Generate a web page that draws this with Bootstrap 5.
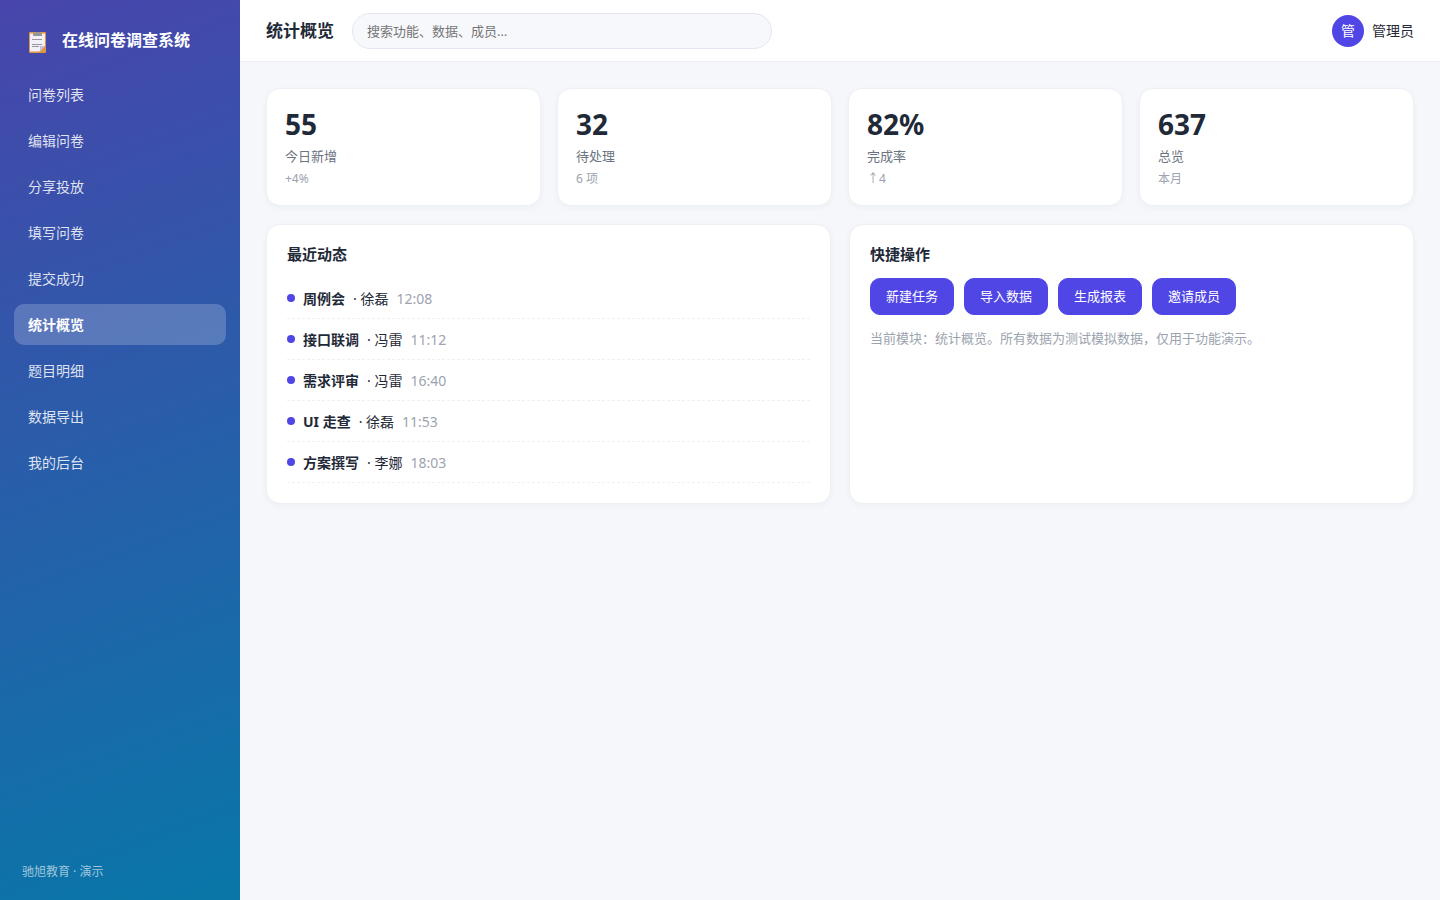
<!DOCTYPE html>
<html lang="zh-CN">
<head>
<meta charset="utf-8">
<meta name="viewport" content="width=device-width, initial-scale=1">
<title>统计概览 - 在线问卷调查系统</title>
<link href="https://cdn.jsdelivr.net/npm/bootstrap@5.3.0/dist/css/bootstrap.min.css" rel="stylesheet">
<style>
:root { --brand: #4f46e5; --ink: #1f2937; --line: #eef0f5; }
body { font: 14px/21px "Noto Sans", "Noto Sans CJK SC", sans-serif; color: var(--ink); background: #f5f7fb; }
.sidebar { width: 240px; padding: 20px 14px; background: linear-gradient(160deg, #4845ab 0%, #0877a8 100%); }
.brand-row { gap: 14px; padding: 7px 14px; margin-bottom: 14px; font-size: 16px; line-height: 24px; }
.side-nav { gap: 5px; }
.side-nav .nav-link { padding: 10px 14px; line-height: 21px; border-radius: 10px; color: rgba(255,255,255,.85); }
.side-nav .nav-link:hover { background: rgba(255,255,255,.1); }
.side-nav .nav-link.active { background: rgba(255,255,255,.2); color: #fff; font-weight: 700; }
.side-foot { padding: 0 8px; font-size: 12px; line-height: 16px; color: rgba(255,255,255,.6); }
.topbar { height: 62px; padding: 0 26px; gap: 18px; border-bottom: 1px solid #eceef4; }
.page-title { font-size: 17px; line-height: 26px; }
.search-box { max-width: 420px; height: 36px; padding: 0 14px; font-size: 13px; border-color: #e4e7f0; background: #f7f8fc; }
.search-box::placeholder { color: #757575; }
.avatar { width: 32px; height: 32px; background: var(--brand); }
.content-area { padding: 26px; }
.stat-grid { display: grid; grid-template-columns: repeat(4, 1fr); gap: 16px; margin-bottom: 18px; }
.panel-grid { display: grid; grid-template-columns: repeat(2, 1fr); gap: 18px; }
.tile { background: #fff; border: 1px solid var(--line); border-radius: 14px; box-shadow: 0 2px 6px rgba(31,41,55,.04); }
.stat { padding: 18px; }
.stat-num { font-size: 28px; line-height: 34px; }
.stat-label { font-size: 13px; line-height: 20px; margin-top: 5px; color: #6b7280; }
.stat-sub { font-size: 12px; line-height: 17px; margin-top: 4px; color: #9ca3af; }
.panel { padding: 18px 20px 20px; }
.panel-title { font-size: 15px; line-height: 22px; margin-bottom: 13px; }
.feed-item { gap: 8px; height: 41px; border-bottom: 1px dashed var(--line); }
.feed-dot { width: 8px; height: 8px; background: var(--brand); }
.muted { color: #9ca3af; }
.action-row { gap: 10px; }
.btn-brand { --bs-btn-color: #fff; --bs-btn-bg: var(--brand); --bs-btn-border-color: var(--brand); --bs-btn-hover-color: #fff; --bs-btn-hover-bg: #4338ca; --bs-btn-padding-x: 15px; --bs-btn-padding-y: 8px; --bs-btn-font-size: 13px; --bs-btn-line-height: 19px; --bs-btn-border-radius: 10px; }
.note { font-size: 13px; line-height: 20px; margin-top: 13px; }
</style>
</head>
<body>
<div class="d-flex min-vh-100">
  <aside class="sidebar d-flex flex-column flex-shrink-0">
    <div class="brand-row d-flex align-items-center fw-bold text-white">
      <svg class="mt-1" width="20" height="22" viewBox="0 0 20 22" aria-hidden="true">
        <rect x="1" y="1" width="17" height="21" rx="1" fill="#e09545"/>
        <path d="M2 2.500h15v12.500l-5 5.500H2z" fill="#f3f0fa"/>
        <path d="M17 15v6h-6z" fill="#e09545"/>
        <path d="M17 15l-5 5.500v-5.500z" fill="#c5bfda"/>
        <path d="M5 2h2.500V1h4v1H14v3H5z" fill="#969696"/>
        <path d="M4 8.500h10M4 13.500h10M4 15.500h7" stroke="#96969c"/>
      </svg>
      <span>在线问卷调查系统</span>
    </div>
    <nav class="side-nav nav flex-column" aria-label="主导航">
      <a class="nav-link" href="#">问卷列表</a>
      <a class="nav-link" href="#">编辑问卷</a>
      <a class="nav-link" href="#">分享投放</a>
      <a class="nav-link" href="#">填写问卷</a>
      <a class="nav-link" href="#">提交成功</a>
      <a class="nav-link active" href="#" aria-current="page">统计概览</a>
      <a class="nav-link" href="#">题目明细</a>
      <a class="nav-link" href="#">数据导出</a>
      <a class="nav-link" href="#">我的后台</a>
    </nav>
    <div class="side-foot mt-auto">驰旭教育 · 演示</div>
  </aside>
  <div class="flex-grow-1">
    <header class="topbar d-flex align-items-center bg-white">
      <h1 class="page-title fw-bold mb-0 text-nowrap">统计概览</h1>
      <input class="search-box form-control rounded-pill" type="search" aria-label="搜索" placeholder="搜索功能、数据、成员…">
      <div class="d-flex align-items-center gap-2 ms-auto text-nowrap">
        <span class="avatar rounded-circle d-flex align-items-center justify-content-center text-white">管</span>
        <span>管理员</span>
      </div>
    </header>
    <main class="content-area">
      <section class="stat-grid" aria-label="数据统计">
        <div class="tile stat"><div class="stat-num fw-bold">55</div><div class="stat-label">今日新增</div><div class="stat-sub">+4%</div></div>
        <div class="tile stat"><div class="stat-num fw-bold">32</div><div class="stat-label">待处理</div><div class="stat-sub">6 项</div></div>
        <div class="tile stat"><div class="stat-num fw-bold">82%</div><div class="stat-label">完成率</div><div class="stat-sub">↑4</div></div>
        <div class="tile stat"><div class="stat-num fw-bold">637</div><div class="stat-label">总览</div><div class="stat-sub">本月</div></div>
      </section>
      <div class="panel-grid">
        <section class="tile panel">
          <h2 class="panel-title fw-bold">最近动态</h2>
          <ul class="list-unstyled mb-0">
            <li class="feed-item d-flex align-items-center"><span class="feed-dot rounded-circle"></span><strong>周例会</strong><span>· 徐磊</span><time class="muted">12:08</time></li>
            <li class="feed-item d-flex align-items-center"><span class="feed-dot rounded-circle"></span><strong>接口联调</strong><span>· 冯雷</span><time class="muted">11:12</time></li>
            <li class="feed-item d-flex align-items-center"><span class="feed-dot rounded-circle"></span><strong>需求评审</strong><span>· 冯雷</span><time class="muted">16:40</time></li>
            <li class="feed-item d-flex align-items-center"><span class="feed-dot rounded-circle"></span><strong>UI 走查</strong><span>· 徐磊</span><time class="muted">11:53</time></li>
            <li class="feed-item d-flex align-items-center"><span class="feed-dot rounded-circle"></span><strong>方案撰写</strong><span>· 李娜</span><time class="muted">18:03</time></li>
          </ul>
        </section>
        <section class="tile panel">
          <h2 class="panel-title fw-bold">快捷操作</h2>
          <div class="action-row d-flex flex-wrap">
            <button type="button" class="btn btn-brand">新建任务</button>
            <button type="button" class="btn btn-brand">导入数据</button>
            <button type="button" class="btn btn-brand">生成报表</button>
            <button type="button" class="btn btn-brand">邀请成员</button>
          </div>
          <p class="note muted mb-0">当前模块：统计概览。所有数据为测试模拟数据，仅用于功能演示。</p>
        </section>
      </div>
    </main>
  </div>
</div>
<script src="https://cdn.jsdelivr.net/npm/bootstrap@5.3.0/dist/js/bootstrap.bundle.min.js"></script>
</body>
</html>
